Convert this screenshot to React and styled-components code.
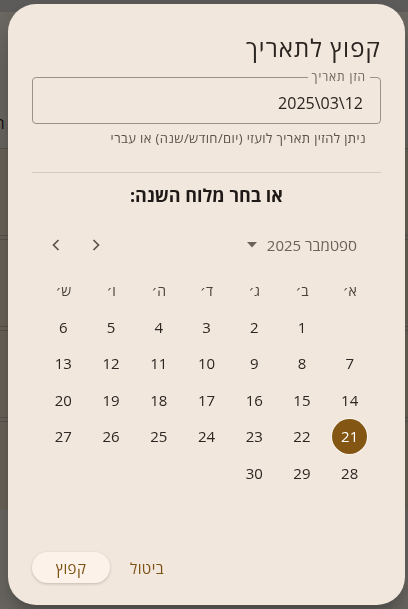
import React from 'react'
import styled, { createGlobalStyle } from 'styled-components'

const GlobalStyle = createGlobalStyle`
  html, body {
    margin: 0;
    padding: 0;
    height: 100%;
  }
  body {
    font-family: "Open Sans", "DejaVu Sans", sans-serif;
    direction: rtl;
    overflow: hidden;
  }
`

const Style = {
  Page: styled.div`
    height: 609px;
    display: flex;
    flex-direction: column;
    background: #ded8ce;
  `,
  TopBar: styled.div`
    height: 12px;
    background: #bebcb8;
  `,
  PageHead: styled.div`
    height: 136px;
    background: #dcd4c8;
    display: flex;
    justify-content: space-between;
    align-items: flex-start;
    font-size: 15px;
    line-height: 20px;
    color: #2a2420;
  `,
  EdgeText: styled.span`
    margin: ${p => p.$top}px -5px 0;
  `,
  Rows: styled.div`
    display: flex;
    flex-direction: column;
    gap: 3px;
    background: #dccfb8;
  `,
  Row: styled.div`
    height: 86px;
    border-top: 1px solid #b4aa9e;
    border-bottom: 1px solid #b4aa9e;
    &:last-child { border-bottom: none; height: 88px; }
  `,
  Backdrop: styled.div`
    position: fixed;
    inset: 0;
    background: rgba(0, 0, 0, 0.5);
  `,
  Dialog: styled.div`
    position: fixed;
    top: 4px;
    left: 8px;
    width: 397px;
    height: 601px;
    box-sizing: border-box;
    border-radius: 28px;
    background: #f2e7dc;
    box-shadow: 0 11px 15px -7px rgba(0,0,0,0.2), 0 24px 38px 3px rgba(0,0,0,0.14), 0 9px 46px 8px rgba(0,0,0,0.12);
    padding: 28px 24px 22px;
    display: flex;
    flex-direction: column;
  `,
  Title: styled.h2`
    margin: 0;
    font-size: 24px;
    line-height: 32px;
    font-weight: 400;
    letter-spacing: 1.1px;
    color: #2a2420;
  `,
  Field: styled.fieldset`
    margin: 7px 0 0;
    padding: 0 17px 0 14px;
    border: 1px solid #9c9087;
    border-radius: 4px;
    height: 53px;
    box-sizing: border-box;
    min-width: 0;
  `,
  Legend: styled.legend`
    font-size: 12px;
    line-height: 12px;
    letter-spacing: 0.9px;
    padding: 0 4px;
    margin-right: -7px;
    color: #6b625b;
  `,
  Value: styled.div`
    height: 40px;
    line-height: 40px;
    font-size: 16px;
    color: #2a2420;
    direction: ltr;
    text-align: right;
  `,
  Helper: styled.p`
    margin: 4px 15px 0;
    font-size: 13px;
    line-height: 20px;
    letter-spacing: 0.4px;
    color: #5b524b;
  `,
  Divider: styled.hr`
    margin: 24px 0 0;
    border: none;
    border-top: 1px solid #d8cabd;
  `,
  Subtitle: styled.h3`
    margin: 10px 0 0;
    text-align: center;
    font-size: 18px;
    line-height: 24px;
    font-weight: 700;
    color: #1f1a17;
  `,
  CalHeader: styled.div`
    margin-top: 23px;
    height: 30px;
    display: flex;
    align-items: center;
    justify-content: space-between;
    padding: 0 24px 0 10px;
  `,
  MonthLabel: styled.div`
    display: flex;
    align-items: center;
    gap: 10px;
    font-size: 15px;
    color: #6b625b;
  `,
  Arrows: styled.div`
    display: flex;
    gap: 12px;
    direction: ltr;
  `,
  ArrowButton: styled.button`
    width: 28px;
    height: 28px;
    border: none;
    background: none;
    padding: 0;
    display: flex;
    align-items: center;
    justify-content: center;
    color: #5b534c;
  `,
  Grid: styled.div`
    margin: 12px auto 0;
    width: 334px;
    display: grid;
    grid-template-columns: repeat(7, 1fr);
    grid-auto-rows: 36.5px;
  `,
  WeekDay: styled.div`
    display: flex;
    align-items: center;
    justify-content: center;
    font-size: 14px;
    color: #4a423c;
  `,
  Day: styled.div`
    display: flex;
    align-items: center;
    justify-content: center;
    span {
      width: 35px;
      height: 35px;
      border-radius: 50%;
      display: flex;
      align-items: center;
      justify-content: center;
      font-size: 15px;
      color: ${p => p.$selected ? '#fff' : '#2d2723'};
      background: ${p => p.$selected ? '#845614' : 'transparent'};
      box-shadow: ${p => p.$selected ? '0 0 0 1px rgba(255,255,255,0.6)' : 'none'};
      font-weight: ${p => p.$selected ? 500 : 400};
    }
  `,
  Actions: styled.div`
    margin-top: auto;
    display: flex;
    justify-content: flex-end;
    align-items: center;
    gap: 8px;
  `,
  TextButton: styled.button`
    font-family: inherit;
    font-size: 15px;
    color: #7b5114;
    background: ${p => p.$filled ? '#fcf2ea' : 'transparent'};
    box-shadow: ${p => p.$filled ? '0 1px 3px rgba(0,0,0,0.2)' : 'none'};
    border: none;
    border-radius: 16px;
    height: 31px;
    padding: 0 ${p => p.$filled ? '23px' : '12px'};
    min-width: ${p => p.$filled ? '78px' : '0'};
    letter-spacing: 0.4px;
  `
}

const weekDays = ['א׳', 'ב׳', 'ג׳', 'ד׳', 'ה׳', 'ו׳', 'ש׳']
const days = [null, ...Array.from({ length: 30 }, (_, i) => i + 1)]

function Chevron({ dir }) {
  return (
    <svg width="10" height="14" viewBox="0 0 10 14">
      <path
        d={dir === 'left' ? 'M7.5 2 L2.5 7 L7.5 12' : 'M2.5 2 L7.5 7 L2.5 12'}
        fill="none"
        stroke="currentColor"
        strokeWidth="1.7"
      />
    </svg>
  )
}

export default function App() {
  return (
    <>
      <GlobalStyle />
      <Style.Page>
        <Style.TopBar />
        <Style.PageHead>
          <Style.EdgeText $top={53}>:</Style.EdgeText>
          <Style.EdgeText $top={101}>ת</Style.EdgeText>
        </Style.PageHead>
        <Style.Rows>
          <Style.Row />
          <Style.Row />
          <Style.Row />
          <Style.Row />
        </Style.Rows>
      </Style.Page>
      <Style.Backdrop />
      <Style.Dialog>
        <Style.Title>קפוץ לתאריך</Style.Title>
        <Style.Field>
          <Style.Legend>הזן תאריך</Style.Legend>
          <Style.Value>2025\03\12</Style.Value>
        </Style.Field>
        <Style.Helper>ניתן להזין תאריך לועזי (יום/חודש/שנה) או עברי</Style.Helper>
        <Style.Divider />
        <Style.Subtitle>או בחר מלוח השנה:</Style.Subtitle>
        <Style.CalHeader>
          <Style.MonthLabel>
            ספטמבר 2025
            <svg width="10" height="6" viewBox="0 0 10 6">
              <polygon points="0,0 10,0 5,5.5" fill="#6b625b" />
            </svg>
          </Style.MonthLabel>
          <Style.Arrows>
            <Style.ArrowButton><Chevron dir="left" /></Style.ArrowButton>
            <Style.ArrowButton><Chevron dir="right" /></Style.ArrowButton>
          </Style.Arrows>
        </Style.CalHeader>
        <Style.Grid>
          {weekDays.map(d => <Style.WeekDay key={d}>{d}</Style.WeekDay>)}
          {days.map((d, i) => (
            <Style.Day key={i} $selected={d === 21}>
              {d && <span>{d}</span>}
            </Style.Day>
          ))}
        </Style.Grid>
        <Style.Actions>
          <Style.TextButton>ביטול</Style.TextButton>
          <Style.TextButton $filled>קפוץ</Style.TextButton>
        </Style.Actions>
      </Style.Dialog>
    </>
  )
}
